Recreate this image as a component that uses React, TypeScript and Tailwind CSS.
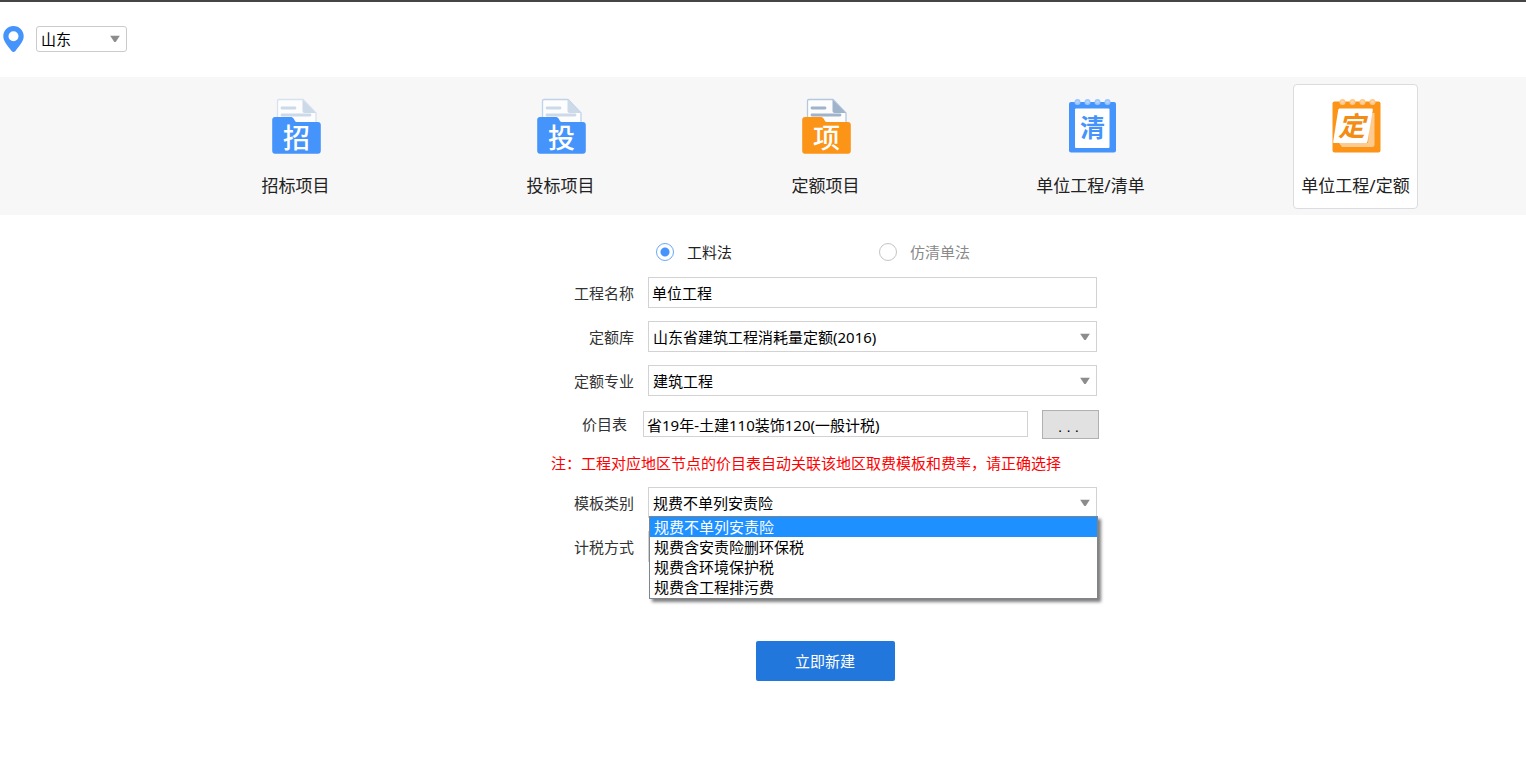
import { useState } from "react";
import type { ReactNode, SelectHTMLAttributes } from "react";

const DocumentSheet = ({ line, fold }: { line: string; fold: string }) => (
  <>
    <path
      d="M13 3.5h24L50 17v12H11.5V5a1.500 1.500 0 0 1 1.500-1.500z"
      fill="#fdfdfe"
      stroke={line}
      strokeWidth="1.300"
    />
    <path d="M36.500 3.500 50 17H38.500a2 2 0 0 1-2-2z" fill={fold} />
    <path
      d="M16 12h13M16 19h28"
      stroke={fold}
      strokeWidth="2.800"
      strokeLinecap="round"
    />
  </>
);

type FolderIconProps = {
  char: string;
  color: string;
  line: string;
  fold: string;
};

const FolderIcon = ({ char, color, line, fold }: FolderIconProps) => (
  <svg viewBox="0 0 60 60" className="h-[60px] w-[60px]" aria-hidden="true">
    <DocumentSheet line={line} fold={fold} />
    <path
      d="M9 21h15.500c1.500 0 2.500.6 3.200 1.800l1.300 2.300c.4.6.9.9 1.700.9H52c1.700 0 2.800 1.100 2.800 2.800v26c0 1.800-1.100 2.900-2.800 2.900H9c-1.700 0-2.800-1.100-2.800-2.900V23.800C6.200 22.100 7.300 21 9 21z"
      fill={color}
    />
    <text
      x="30.500"
      y="51.500"
      textAnchor="middle"
      fill="#fff"
      className="text-[27px] font-medium"
    >
      {char}
    </text>
  </svg>
);

const Rings = ({ color, fill }: { color: string; fill: string }) => (
  <g fill={fill} stroke={color} strokeWidth="1.500">
    <circle cx="16.500" cy="6" r="2.300" />
    <circle cx="26.500" cy="6" r="2.300" />
    <circle cx="36.500" cy="6" r="2.300" />
    <circle cx="46.500" cy="6" r="2.300" />
  </g>
);

const ListIcon = () => (
  <svg viewBox="0 0 60 60" className="h-[60px] w-[60px]" aria-hidden="true">
    <rect x="8" y="6" width="47" height="50.500" rx="2" fill="#4594fb" />
    <rect x="14" y="12.500" width="34.500" height="39.500" rx="1" fill="#fff" />
    <Rings color="#9cc6fc" fill="#b5d4fc" />
    <text
      x="31.500"
      y="41"
      textAnchor="middle"
      fill="#4594fb"
      className="text-[25px] font-bold"
    >
      清
    </text>
  </svg>
);

const QuotaIcon = () => (
  <svg viewBox="0 0 60 60" className="h-[60px] w-[60px]" aria-hidden="true">
    <rect x="6.500" y="5.500" width="48" height="51" rx="2" fill="#fb9417" />
    <path d="M44 17h4.500v32a2 2 0 0 1-2 2H16l-3-4h29z" fill="#fdca90" />
    <path
      d="M14 12.500h31.500c1 0 1.500.6 1.300 1.600L41.500 45.500c-.2 1-.8 1.500-1.800 1.500H8.500c-1 0-1.500-.6-1.300-1.600l5-31.400c.2-1 .8-1.500 1.800-1.500z"
      fill="#fff"
    />
    <Rings color="#fdc88c" fill="#fdd3a4" />
    <text
      x="25.500"
      y="39.500"
      textAnchor="middle"
      fill="#f28c14"
      className="text-[27px] font-bold italic"
    >
      定
    </text>
  </svg>
);

const tabs = [
  {
    label: "招标项目",
    icon: <FolderIcon char="招" color="#4594fb" line="#d6e2ef" fold="#ccd9e8" />,
  },
  {
    label: "投标项目",
    icon: <FolderIcon char="投" color="#4594fb" line="#bed3ea" fold="#ccd9e8" />,
  },
  {
    label: "定额项目",
    icon: <FolderIcon char="项" color="#fb9417" line="#b4c8de" fold="#9fb4cb" />,
  },
  { label: "单位工程/清单", icon: <ListIcon /> },
  { label: "单位工程/定额", icon: <QuotaIcon /> },
];

const templates = [
  "规费不单列安责险",
  "规费含安责险删环保税",
  "规费含环境保护税",
  "规费含工程排污费",
];

const Caret = () => (
  <svg
    viewBox="0 0 10 7"
    className="pointer-events-none absolute top-1/2 right-[7px] h-[7px] w-[10px] -translate-y-1/2"
    aria-hidden="true"
  >
    <path d="M0 0h10L5.700 6.500H4.300z" fill="#8c8c8c" />
  </svg>
);

const SelectBox = (props: SelectHTMLAttributes<HTMLSelectElement>) => (
  <div className="relative">
    <select
      {...props}
      className="block h-[31px] w-full appearance-none border border-[#d2d2d2] bg-white pr-6 pl-1 outline-none"
    />
    <Caret />
  </div>
);

type FieldProps = { id: string; label: string; children: ReactNode };

const Field = ({ id, label, children }: FieldProps) => (
  <div className="flex items-center pr-[2px]">
    <label htmlFor={id} className="w-[83px] text-right text-[#333]">
      {label}
    </label>
    <div className="relative ml-[14px] flex-1">{children}</div>
  </div>
);

const App = () => {
  const [activeTab, setActiveTab] = useState("单位工程/定额");
  const [method, setMethod] = useState("工料法");
  const [name, setName] = useState("单位工程");
  const [priceList, setPriceList] = useState("省19年-土建110装饰120(一般计税)");
  const [template, setTemplate] = useState(templates[0]);
  const [listOpen, setListOpen] = useState(true);

  return (
    <div className="min-h-screen border-t-2 border-[#454545] bg-white font-['Noto_Sans','Noto_Sans_CJK_SC',sans-serif] text-[15px] leading-6 text-black">
      {/* Region */}
      <header className="flex h-[75px] items-center gap-3 pb-[2px] pl-[3px]">
        <svg viewBox="0 0 21 26" className="h-[26px] w-[21px]" aria-hidden="true">
          <path
            d="M10.500 0C4.700 0 .3 4.500.3 10.100c0 4.800 3 8.100 8.300 14.900 1 1.300 2.800 1.300 3.800 0 5.300-6.800 8.300-10.100 8.300-14.900C20.700 4.500 16.300 0 10.500 0zm0 5.300a5 5 0 1 1 0 10 5 5 0 0 1 0-10z"
            fill="#4594fb"
          />
        </svg>
        <div className="relative w-[91px]">
          <select
            aria-label="地区"
            className="block h-[26px] w-full appearance-none rounded-[3px] border border-[#cbcbcb] bg-white pr-5 pl-1 outline-none"
          >
            <option>山东</option>
          </select>
          <Caret />
        </div>
      </header>

      {/* Project types */}
      <nav className="grid grid-cols-5 justify-items-center bg-[#f7f7f7] pt-[7px] pr-[38px] pb-[6px] pl-[163px]">
        {tabs.map((tab) => (
          <button
            key={tab.label}
            type="button"
            onClick={() => setActiveTab(tab.label)}
            className={`flex h-[125px] w-[125px] flex-col items-center gap-[18px] rounded-[4px] border pt-[11px] text-[17px] whitespace-nowrap text-[#222] ${
              activeTab === tab.label
                ? "border-[#d9dde1] bg-white"
                : "border-transparent"
            }`}
          >
            {tab.icon}
            <span>{tab.label}</span>
          </button>
        ))}
      </nav>

      <main className="pt-[25px] pb-12 pl-[124px]">
        <form
          className="mx-auto flex w-[548px] flex-col"
          onSubmit={(e) => e.preventDefault()}
        >
          {/* Pricing method */}
          <div className="grid grid-cols-[223px_1fr] pl-[105px]">
            {["工料法", "仿清单法"].map((item) => (
              <label
                key={item}
                className={`flex items-center gap-[13px] ${
                  method === item ? "text-[#222]" : "text-[#8a8a8a]"
                }`}
              >
                <input
                  type="radio"
                  name="method"
                  checked={method === item}
                  onChange={() => setMethod(item)}
                  className="h-[18px] w-[18px] appearance-none rounded-full border border-[#c4c4c4] bg-white checked:border-[#6aa8f8] checked:bg-[radial-gradient(circle,#4594fb_4px,#fff_5px)]"
                />
                {item}
              </label>
            ))}
          </div>

          <div className="mt-[13px] flex flex-col gap-[13px]">
            <Field id="name" label="工程名称">
              <input
                id="name"
                type="text"
                value={name}
                onChange={(e) => setName(e.target.value)}
                className="block h-[31px] w-full border border-[#d2d2d2] bg-white px-[3px] outline-none"
              />
            </Field>
            <Field id="library" label="定额库">
              <SelectBox id="library">
                <option>山东省建筑工程消耗量定额(2016)</option>
              </SelectBox>
            </Field>
            <Field id="specialty" label="定额专业">
              <SelectBox id="specialty">
                <option>建筑工程</option>
              </SelectBox>
            </Field>

            <div className="flex h-[30px] items-center">
              <label htmlFor="price" className="w-[76px] text-right text-[#333]">
                价目表
              </label>
              <input
                id="price"
                type="text"
                value={priceList}
                onChange={(e) => setPriceList(e.target.value)}
                className="ml-4 h-[26px] min-w-0 flex-1 border border-[#d2d2d2] bg-white px-[3px] outline-none"
              />
              <button
                type="button"
                className="ml-[14px] h-[29px] w-[57px] border border-[#b0b0b0] bg-[#e1e1e1] pt-1 pr-1 font-['Liberation_Sans',sans-serif]"
              >
                . . .
              </button>
            </div>
          </div>

          <p className="mt-3 whitespace-nowrap text-[#fe0000]">
            注：工程对应地区节点的价目表自动关联该地区取费模板和费率，请正确选择
          </p>

          <div className="mt-3 flex flex-col gap-[13px]">
            <Field id="template" label="模板类别">
              <SelectBox
                id="template"
                value={template}
                onChange={(e) => setTemplate(e.target.value)}
              >
                {templates.map((item) => (
                  <option key={item}>{item}</option>
                ))}
              </SelectBox>
              {listOpen && (
                <ul
                  role="listbox"
                  aria-label="模板类别"
                  className="absolute top-[29px] -right-px left-px z-10 border border-[#7f858c] bg-white pb-px shadow-[3px_3px_3px_rgba(0,0,0,0.5)]"
                >
                  {templates.map((item) => (
                    <li
                      key={item}
                      role="option"
                      aria-selected={item === template}
                      onClick={() => {
                        setTemplate(item);
                        setListOpen(false);
                      }}
                      className={`h-5 pl-1 leading-5 ${
                        item === template ? "bg-[#1e90ff] text-white" : ""
                      }`}
                    >
                      {item}
                    </li>
                  ))}
                </ul>
              )}
            </Field>
            <Field id="tax" label="计税方式">
              <SelectBox id="tax">
                <option value="" />
              </SelectBox>
            </Field>
          </div>

          <button
            type="submit"
            className="mt-[79px] h-10 w-[139px] self-center rounded-[2px] bg-[#2277dd] text-white"
          >
            立即新建
          </button>
        </form>
      </main>
    </div>
  );
};

export default App;
